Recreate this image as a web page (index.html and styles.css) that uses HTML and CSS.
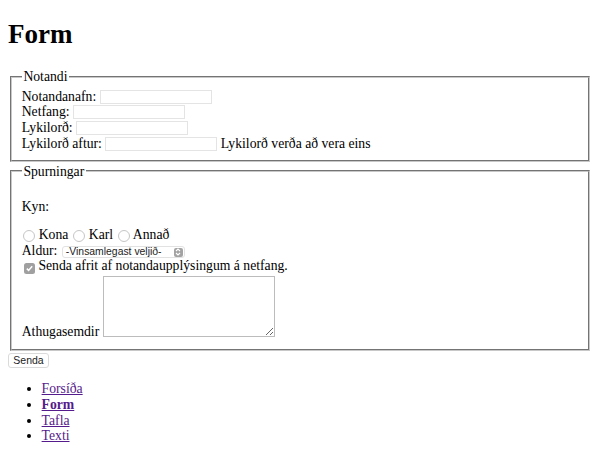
FILE: index.html
```html
<!DOCTYPE html>
<html lang="is">
<head>
<meta charset="utf-8">
<title>Form</title>
<link rel="stylesheet" href="styles.css">
</head>
<body>
<h1 class="title">Form</h1>
<form class="form">
  <fieldset class="group">
    <legend class="legend">Notandi</legend>
    <div class="row">Notandanafn: <input class="field" type="text"></div>
    <div class="row">Netfang: <input class="field" type="text"></div>
    <div class="row">Lykilorð: <input class="field" type="password"></div>
    <div class="row">Lykilorð aftur: <input class="field" type="password"> Lykilorð verða að vera eins</div>
  </fieldset>
  <fieldset class="group group-q">
    <legend class="legend">Spurningar</legend>
    <p class="para">Kyn:</p>
    <div class="row"><input class="radio" type="radio" name="kyn"> Kona <input class="radio" type="radio" name="kyn"> Karl <input class="radio" type="radio" name="kyn"> Annað</div>
    <div class="row">Aldur: <span class="select"><span class="select-text">-Vinsamlegast veljið-</span><span class="stepper"><svg width="8" height="10" viewBox="0 0 8 10"><path d="M2 4 L4 2 L6 4 M2 6 L4 8 L6 6" fill="none" stroke="#fff" stroke-width="1.1"/></svg></span></span></div>
    <div class="row"><input class="check" type="checkbox" checked> Senda afrit af notandaupplýsingum á netfang.</div>
    <div class="row">Athugasemdir <span class="area-wrap"><textarea class="area"></textarea></span></div>
  </fieldset>
  <button class="btn" type="button">Senda</button>
</form>
<ul class="nav">
  <li><a class="link" href="#">Forsíða</a></li>
  <li><a class="link current" href="#">Form</a></li>
  <li><a class="link" href="#">Tafla</a></li>
  <li><a class="link" href="#">Texti</a></li>
</ul>
</body>
</html>
```
FILE: styles.css
```css
html, body {
  margin: 0;
  padding: 0;
}
body {
  padding: 0 8px;
  font-family: "Liberation Serif", "Times New Roman", serif;
  font-size: 13.7px;
  line-height: 15.75px;
  color: #000;
  background: #fff;
}
.title {
  font-size: 27px;
  font-weight: bold;
  margin: 0 0 18.7px;
  padding: 19px 0 0;
  height: 31px;
  line-height: 31px;
}
.form {
  margin: 0;
}
.group {
  margin: 0 1.7px;
  padding: 4.25px 10px 8.4px;
  border: 2px groove #c8c8c8;
  min-inline-size: 0;
}
.group-q {
  margin-top: 1.5px;
  padding-top: 5px;
}
.legend {
  padding: 0 1.7px;
  margin-left: 0;
}
.row {
  white-space: nowrap;
}
.para {
  margin: 14.7px 0 12.2px;
}
.field {
  width: 112px;
  height: 14px;
  box-sizing: border-box;
  border: 1px solid #e4e4e4;
  margin: 1px 0 0;
  padding: 0;
  vertical-align: top;
  background: #fff;
}
.radio {
  appearance: none;
  -webkit-appearance: none;
  width: 12px;
  height: 12px;
  box-sizing: border-box;
  border: 1px solid #c6c6c6;
  border-radius: 50%;
  margin: 3.5px 0 0 1.6px;
  vertical-align: top;
  background: #fff;
}
.select {
  display: inline-flex;
  align-items: center;
  justify-content: space-between;
  box-sizing: border-box;
  width: 123px;
  height: 12px;
  margin: 3.5px 0 0 1px;
  padding: 0 1px 0 3px;
  border: 1px solid #e2e2e2;
  border-radius: 3px;
  font-family: "Liberation Sans", Arial, sans-serif;
  font-size: 10.4px;
  line-height: 10px;
  vertical-align: top;
  color: #222;
  background: #fff;
}
.stepper {
  display: inline-flex;
  width: 9px;
  height: 9px;
  align-items: center;
  justify-content: center;
  border-radius: 2px;
  background: #a3a3a3;
}
.check {
  appearance: none;
  -webkit-appearance: none;
  width: 11px;
  height: 11px;
  border-radius: 2.5px;
  margin: 5px 0 -1px 2.3px;
  vertical-align: top;
  background: #a0a0a0 url("data:image/svg+xml;utf8,<svg xmlns='http://www.w3.org/2000/svg' width='11' height='11'><path d='M2.8 5.6 L4.6 7.4 L8.2 3.2' fill='none' stroke='white' stroke-width='1.5'/></svg>") no-repeat center;
}
.area-wrap {
  display: inline-block;
  margin-top: 2px;
  vertical-align: -0.7px;
}
.area {
  display: block;
  width: 172px;
  height: 61px;
  box-sizing: border-box;
  border: 1px solid #bcbcbc;
  margin: 0;
  resize: both;
  background: #fff;
}
.btn {
  display: block;
  font-family: "Liberation Sans", Arial, sans-serif;
  font-size: 10.5px;
  width: 41px;
  height: 15px;
  line-height: 13px;
  padding: 0;
  margin: 2px 0 0;
  border: 1px solid #dadada;
  border-radius: 3px;
  background: #fff;
  color: #222;
}
.nav {
  margin: 13.5px 0 0;
  padding-left: 33.6px;
}
.link {
  color: #551a8b;
}
.current {
  font-weight: bold;
}
```
